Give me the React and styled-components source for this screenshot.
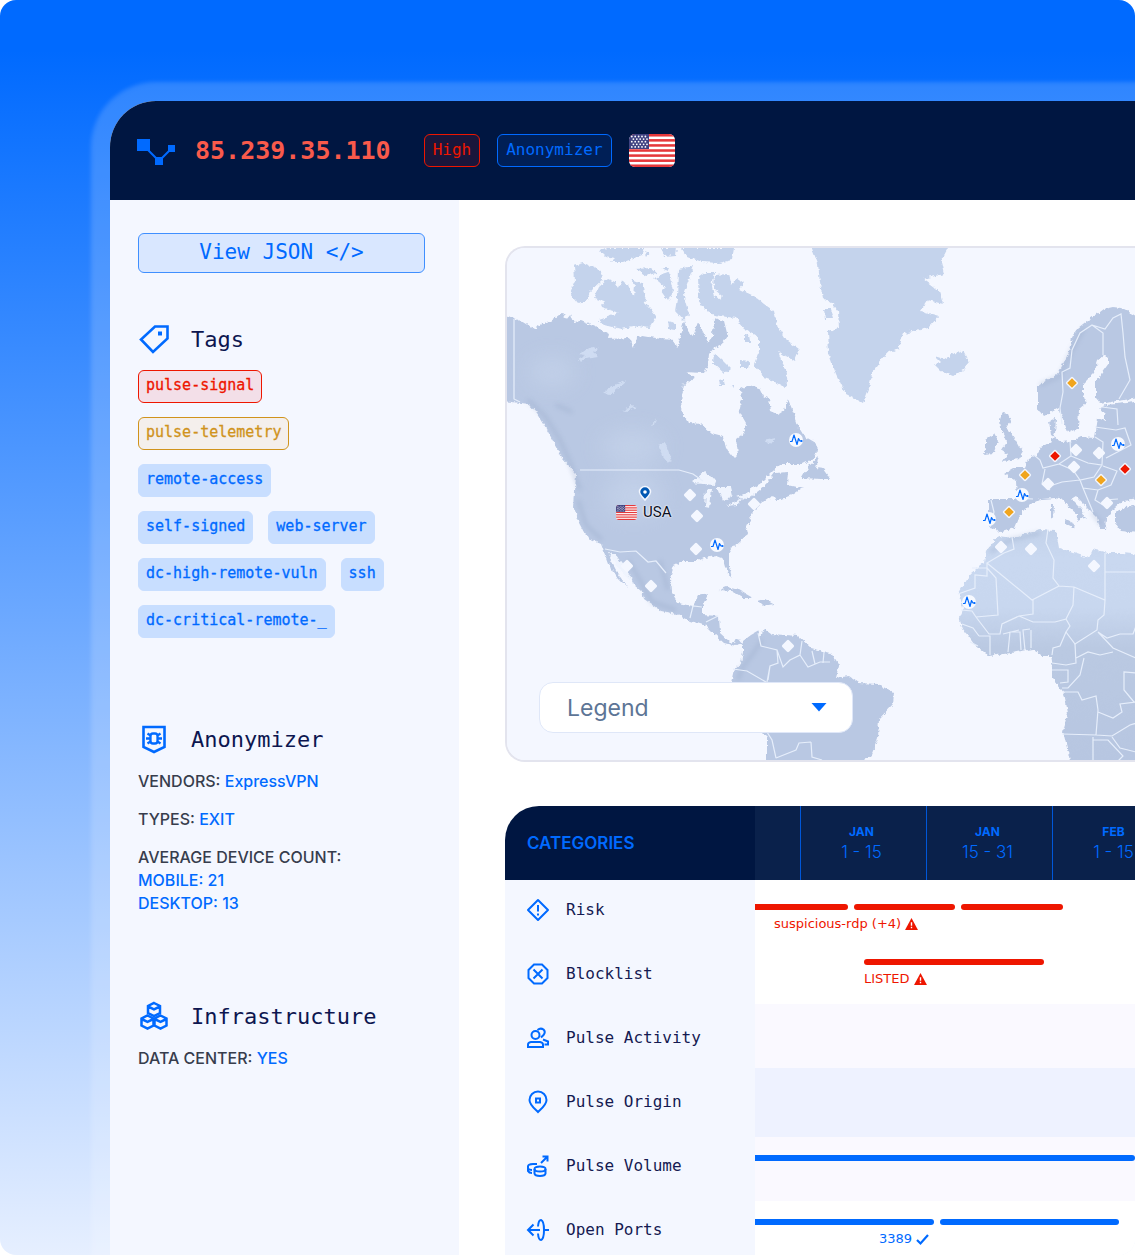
import React from "react";
import styled, { createGlobalStyle, css } from "styled-components";

const mono = `"DejaVu Sans Mono", "Liberation Mono", monospace`;
const sans = `Inter, "Liberation Sans", sans-serif`;

const tagRows = [
  [{ label: "pulse-signal", tone: "red" }],
  [{ label: "pulse-telemetry", tone: "amber" }],
  [{ label: "remote-access" }],
  [{ label: "self-signed" }, { label: "web-server" }],
  [{ label: "dc-high-remote-vuln" }, { label: "ssh" }],
  [{ label: "dc-critical-remote-_" }],
];

const periods = [
  { month: "JAN", days: "1 - 15" },
  { month: "JAN", days: "15 - 31" },
  { month: "FEB", days: "1 - 15" },
];

const land = [
  // mainland north america
  "M500 312L507 315 520 320 533 328 543 322 550 320 562 311 565 319 570 313 573 321 580 320 597 327 608 333 607 338 628 337 633 347 636 336 642 335 660 338 673 339 676 347 680 333 684 320 689 334 693 333 697 322 701 330 707 341 712 335 713 317 723 320 727 336 722 343 713 347 708 353 707 364 703 372 683 371 695 376 683 384 680 400 682 413 688 422 700 423 710 432 722 435 725 447 733 457 737 453 735 438 743 432 745 422 738 410 741 398 740 388 748 384 758 387 762 395 768 398 770 410 777 413 783 409 787 398 793 413 797 425 803 435 815 442 818 450 812 458 802 463 780 463 772 470 760 482 748 490 742 497 751 495 765 484 774 472 787 471 786 484 800 487 803 486 793 493 783 497 775 499 770 496 760 503 748 515 750 522 745 524 747 533 733 545 728 553 728 565 731 577 727 572 723 558 715 555 703 557 697 560 683 560 673 565 669 577 670 590 677 602 692 605 697 595 707 593 702 605 702 614 718 615 719 632 730 642 738 638 742 643 735 645 723 642 713 633 705 625 690 620 675 613 660 610 643 598 641 590 633 583 623 572 610 552 608 557 615 570 627 587 617 577 607 562 600 543 587 537 578 520 573 507 575 473 562 458 552 440 545 427 536 412 528 403 520 402 500 400Z",
  // south america
  "M742 640L750 634 757 630 760 636 763 628 770 633 797 635 810 647 830 652 838 665 835 677 848 675 858 682 877 683 893 692 892 703 878 718 877 737 870 755 857 764 766 764 766 737 760 731 745 705 730 682 733 668 740 662 742 650Z",
  // great britain, ireland
  "M1002 412L1007 413 1010 420 1005 427 1009 431 1013 437 1018 446 1023 450 1018 458 1002 460 1007 453 1001 449 1006 441 1003 434 999 427 998 418Z",
  "M985 438L993 433 997 440 993 452 982 453 985 446Z",
  // scandinavia and finland
  "M1037 385L1046 379 1057 373 1067 353 1072 333 1077 327 1087 319 1095 314 1103 308 1112 306 1120 307 1128 311 1140 318 1140 397 1115 400 1100 403 1095 397 1095 380 1108 362 1108 356 1103 355 1097 360 1093 372 1082 383 1082 393 1085 402 1078 408 1077 427 1067 432 1058 407 1043 415 1037 407Z",
  // continental europe
  "M1140 400L1125 402 1105 404 1098 408 1104 413 1104 420 1097 417 1094 437 1080 436 1072 440 1060 441 1050 434 1048 420 1055 417 1054 432 1050 441 1040 447 1036 454 1027 458 1023 467 1013 467 1003 473 1015 480 1016 498 987 498 987 527 995 528 998 532 1013 527 1018 515 1030 503 1040 498 1054 497 1062 499 1070 508 1077 514 1076 521 1083 516 1086 518 1080 508 1070 498 1075 495 1088 508 1096 516 1099 528 1104 528 1105 518 1113 508 1122 500 1140 498 1140 487 1128 483 1121 486 1120 494 1140 494Z",
  "M1114 511L1125 506 1140 502 1140 532 1120 530 1114 522Z",
  "M1064 518L1074 523 1073 527 1064 523ZM1050 503L1053 503 1052 518 1050 517Z",
  // cuba, hispaniola
  "M718 589L726 586 738 589 752 597 742 597 730 590ZM757 600L764 598 773 603 762 605Z",
  // newfoundland
  "M818 456L815 467 822 468 829 478 820 478 801 477 808 465Z",
];

const arcticLand = [
  "M573 265L583 262 600 270 601 280 590 290 587 298 578 303 569 292 574 280Z",
  "M593 297L598 286 607 278 614 281 618 288 620 280 627 284 633 297 634 284 631 278 641 282 645 302 655 315 648 327 638 325 620 328 600 323 598 319 618 312 600 306 604 301Z",
  "M653 277L668 272 672 290 667 300 660 290 664 286ZM666 320L674 322 674 329 667 328Z",
  "M677 268L693 265 688 278 682 293 688 313 683 320 674 310 676 298Z",
  "M598 249L606 247 643 247 640 254 622 261 610 261 614 257 604 255ZM644 250L648 252 646 255ZM660 247L676 247 675 254 663 255ZM680 247L733 247 731 259 718 262 700 261 687 256Z",
  "M635 268L650 267 656 272 645 275ZM660 266L668 266 666 270Z",
  "M697 277L705 271 714 271 711 285 713 296 717 298 722 296 713 288 714 274 728 273 731 284 736 277 743 282 738 288 753 295 763 303 773 310 777 327 783 337 798 348 793 360 777 350 781 361 787 372 785 387 772 380 763 377 753 363 758 350 758 336 743 327 735 317 718 315 707 312 698 300Z",
  "M713 352L722 360 730 368 724 373 712 362ZM743 334L749 335 750 341 743 341ZM740 360L749 361 747 367 740 367ZM718 380L722 379 723 384 719 384ZM730 384L733 384 733 388Z",
  // greenland
  "M810 245L817 263 819 282 822 297 831 302 837 310 838 327 827 330 828 353 835 373 845 393 853 397 862 402 868 386 872 370 883 355 897 348 903 333 927 327 938 315 920 310 927 299 942 303 938 290 922 278 943 273 940 260 948 245Z",
  "M823 308L830 308 833 318 824 318Z",
  // iceland
  "M933 355L943 358 953 353 962 350 968 362 962 369 952 375 940 370 933 363 940 362Z",
];

const africa =
  "M998 535L985 550 983 562 970 572 958 592 962 607 958 617 962 628 973 643 988 655 1010 652 1032 648 1040 655 1050 655 1052 667 1052 677 1063 692 1067 712 1062 730 1070 764 1140 764 1140 554 1122 552 1107 552 1092 548 1088 557 1073 552 1058 547 1055 530 1040 529 1027 532 1013 537Z";

const borders = [
  "M514 319V399L520 402",
  "M580 470H679L693 474 703 481",
  "M605 549L620 552 636 551 648 562 656 561 666 573",
  // central and south america
  "M690 618L693 606 702 607M706 622L718 616",
  "M758 633L761 646 777 650 778 663 770 666 767 682M733 669L747 671 766 682M777 650L783 667 790 660 800 655 802 641M800 655L808 667 820 662 830 662M812 651L815 664M824 652L823 663M770 666L768 680",
  "M767 732L772 740 776 758M776 758L796 750 799 743 811 742M811 742L812 757 822 760",
  // scandinavia
  "M1062 424L1060 408 1063 392 1062 372 1070 368 1072 350 1080 333 1092 325 1103 333 1103 355M1092 325L1105 329 1113 318 1121 314 1123 333 1125 357 1130 380 1119 399",
  // central europe
  "M1070 441L1071 456 1059 464 1043 468 1040 460 1034 455M1071 456L1088 463 1102 465 1103 442 1095 437M1095 427L1116 430 1125 428 1131 445 1106 458M1102 407L1117 409 1118 425M1102 465L1094 477 1080 480 1073 470 1059 464M1045 469L1042 484 1050 490M1050 486L1062 482 1080 480M1080 480L1083 488 1098 490 1111 485 1117 471 1103 466M1083 488L1088 500 1093 512M1098 490L1095 500 1103 505M1104 500L1118 499M1015 498L1033 499",
  "M991 500L994 512 990 527",
  // north and west africa
  "M1004 553L1014 549 1012 537M1004 553L987 563 1032 600 1059 586 1053 578 1054 560 1046 543 1048 529M987 563V576L975 575 975 588 958 594M972 568H987M987 568L996 578 998 615 976 617M961 610L972 611 976 617 989 634 1000 634 1002 624 1019 616 1033 614 1033 600M1059 586L1074 587 1105 600V553M1105 572H1140M1074 587L1073 605 1066 619 1055 622 1033 622 1019 616M1105 600L1104 615 1098 620 1097 630 1075 644 1066 632 1070 626 1066 619M1098 632L1107 638 1120 634 1133 634 1136 626M1098 632L1113 648 1136 658",
  "M962 624L973 628 979 636M979 636L990 636 990 655M970 642L978 646M1008 652L1010 632 1020 632 1021 650M1025 650L1023 630 1030 629M1031 648V630M1019 630L1003 634",
  "M1066 632L1060 646 1053 648 1052 655M1075 644L1076 663 1066 665 1052 663M1076 658L1088 652 1100 655 1113 652M1084 658L1080 675 1068 688 1062 688M1052 670H1068V682L1060 683M1063 692H1078L1082 700 1096 696 1098 710 1096 735 1062 734M1096 735L1112 736 1130 725 1140 722M1093 737V764M1093 740H1108L1123 756 1115 764M1098 712L1113 718 1122 712 1120 704 1136 702M1136 673L1124 672 1124 690 1134 702M1112 737L1120 748 1140 753",
];

const lakes = [
  "M690 482L703 471 716 479 714 484ZM705 488L711 487 709 507 704 506ZM716 486L730 486 732 494 722 500Z",
  "M724 505L742 497 736 504ZM735 496L748 491 745 498Z",
  "M608 553L614 553 626 569 633 583 622 573Z",
];

const highlands = [
  "M577 353L590 345 597 348 592 352 597 356 585 358 580 362 577 358 584 354ZM602 392L614 384 626 379 616 388 609 394ZM621 410L630 405 636 406 625 411ZM650 425L655 417 653 424ZM657 444L664 441 671 460 667 462 662 456ZM764 440L774 438 770 443Z",
];

// mountain ridges, drawn blurred over the land
const ridges = [
  "M528 400L545 416 560 440 570 462 580 490M556 405L572 412M578 500L586 525 602 540M628 560L640 580 652 602 676 610M660 560L668 590",
  "M762 640L752 655 742 668 738 680M1040 385L1060 376 1072 350 1084 328M990 552L1010 540 1040 533M1092 512L1102 525",
];

const diamonds = [
  { x: 690, y: 495 },
  { x: 697, y: 516 },
  { x: 696, y: 549 },
  { x: 651, y: 586 },
  { x: 627, y: 566 },
  { x: 754, y: 504 },
  { x: 788, y: 646 },
  { x: 1001, y: 547 },
  { x: 1031, y: 549 },
  { x: 1094, y: 566 },
  { x: 1076, y: 450 },
  { x: 1099, y: 453 },
  { x: 1074, y: 467 },
  { x: 1048, y: 484 },
  { x: 1107, y: 503 },
  { x: 1072, y: 383, color: "#f0a51e" },
  { x: 1025, y: 475, color: "#f0a51e" },
  { x: 1101, y: 480, color: "#f0a51e" },
  { x: 1009, y: 512, color: "#f0a51e" },
  { x: 1055, y: 456, color: "#ee1600" },
  { x: 1125, y: 469, color: "#ee1600" },
];

const pulses = [
  { x: 796, y: 440 },
  { x: 717, y: 545 },
  { x: 1118, y: 444 },
  { x: 1022, y: 495 },
  { x: 989, y: 519 },
  { x: 969, y: 602 },
];

const Flag = ({ width, height }) => (
  <svg width={width} height={height} viewBox="0 0 46 33" aria-label="US flag">
    <clipPath id={`flag${width}`}>
      <rect width="46" height="33" rx="6" />
    </clipPath>
    <g clipPath={`url(#flag${width})`}>
      <rect width="46" height="33" fill="#fff" />
      {[0, 1, 2, 3, 4, 5, 6].map((n) => (
        <rect key={n} y={n * 5.08} width="46" height="2.54" fill="#e5383b" />
      ))}
      <rect width="20" height="15" fill="#3f4281" />
      {[0, 1, 2, 3, 4].map((r) =>
        [0, 1, 2, 3, 4].map((c) => (
          <circle
            key={`${r}${c}`}
            cx={(r % 2 ? 4.4 : 2.8) + c * 3.4}
            cy={2.5 + r * 2.6}
            r="0.9"
            fill="#fff"
          />
        ))
      )}
    </g>
  </svg>
);

const WorldMap = () => (
  <MapSvg viewBox="507 248 628 512" preserveAspectRatio="xMinYMin slice">
    <defs>
      <linearGradient id="sahara" x1="0" y1="0" x2="0" y2="1">
        <stop offset="0" stopColor="#c3d2ea" />
        <stop offset="0.12" stopColor="#c9d8f0" />
        <stop offset="0.33" stopColor="#c8d7ef" />
        <stop offset="0.5" stopColor="#bac9e2" />
        <stop offset="1" stopColor="#b7c6e1" />
      </linearGradient>
      <filter id="coast" x="0" y="0" width="1" height="1">
        <feTurbulence baseFrequency="0.14" numOctaves="2" seed="4" />
        <feDisplacementMap
          in="SourceGraphic"
          scale="4"
          xChannelSelector="R"
          yChannelSelector="G"
        />
      </filter>
      <filter id="soft" x="-50%" y="-50%" width="200%" height="200%">
        <feGaussianBlur stdDeviation="12" />
      </filter>
      <filter id="ridge" x="-10%" y="-10%" width="120%" height="120%">
        <feGaussianBlur stdDeviation="2" />
      </filter>
    </defs>
    <g filter="url(#coast)">
      <rect x="490" y="240" width="660" height="540" fill="#f4f7ff" />
      <g fill="#b9c8e3">
        {land.map((d) => (
          <path key={d} d={d} />
        ))}
      </g>
      <g fill="#c4d3ec">
        {arcticLand.map((d) => (
          <path key={d} d={d} />
        ))}
      </g>
      <path d={africa} fill="url(#sahara)" />
      <g fill="#cfdcf2">
        {highlands.map((d) => (
          <path key={d} d={d} />
        ))}
      </g>
      <g fill="#eff4fe">
        {lakes.map((d) => (
          <path key={d} d={d} />
        ))}
      </g>
    </g>
    <g filter="url(#soft)" fill="#d3e0f4" opacity="0.4">
      <ellipse cx="552" cy="372" rx="24" ry="14" />
      <ellipse cx="632" cy="447" rx="32" ry="16" />
      <ellipse cx="634" cy="496" rx="30" ry="20" />
    </g>
    <g
      filter="url(#ridge)"
      fill="none"
      stroke="#93a5c4"
      strokeWidth="4"
      opacity="0.3"
    >
      {ridges.map((d) => (
        <path key={d} d={d} />
      ))}
    </g>
    <g fill="none" stroke="#e6eefb" strokeWidth="1.2">
      {borders.map((d) => (
        <path key={d} d={d} />
      ))}
    </g>
    {diamonds.map(({ x, y, color }) => (
      <g key={`${x}-${y}`} transform={`translate(${x} ${y}) rotate(45)`}>
        <rect x="-4.7" y="-4.7" width="9.4" height="9.4" rx="1.4" fill="#f4f7ff" />
        {color && <rect x="-3.4" y="-3.4" width="6.8" height="6.8" fill={color} />}
      </g>
    ))}
    {pulses.map(({ x, y }) => (
      <g key={x} transform={`translate(${x} ${y})`}>
        <circle r="7" fill="#f6f9ff" />
        <path
          d="M-6 1.5H-4L-2-5 1 4.500 2.500-1.500 4 1H6"
          fill="none"
          stroke="#006aff"
          strokeWidth="1.2"
          strokeLinejoin="round"
        />
        <circle cx="5.500" cy="1" r="1.100" fill="#006aff" />
      </g>
    ))}
    <path
      d="M645 500C642 496 639.500 495 639.500 492a5.500 5.500 0 0 1 11 0C650.500 495 648 496 645 500Z"
      fill="#0057b3"
      stroke="#f4f7ff"
      strokeWidth="1.500"
    />
    <circle cx="645" cy="492" r="1.800" fill="#fff" />
  </MapSvg>
);

const Icon = ({ children, size = 30 }) => (
  <svg
    width={size}
    height={size}
    viewBox={`0 0 ${size} ${size}`}
    fill="none"
    stroke="#006aff"
    strokeWidth={size > 24 ? 2.6 : 2}
  >
    {children}
  </svg>
);

const Logo = () => (
  <svg width="39" height="28" viewBox="0 0 39 28" fill="#006aff">
    <path d="M11 13L22 24 34 12" fill="none" stroke="#006aff" strokeWidth="2" />
    <path d="M0 2h13v12H0zM18 20h8v8h-8zM31 8h7v7h-7z" />
  </svg>
);

const TagIcon = () => (
  <Icon>
    <path d="M16 2.500H28.500V14.500L14 28 2 15.500Z" />
    <path d="M19 7.500h4v4h-4z" fill="#006aff" stroke="none" />
  </Icon>
);

const ShieldBugIcon = () => (
  <Icon>
    <path d="M4.500 3H25.500V23L15 28 4.500 23Z" />
    <rect x="11.500" y="9.500" width="7" height="10" rx="2.500" strokeWidth="2.300" />
    <path
      d="M11.500 11.500L8.500 9.500M11 14.500H7M11.500 17.500L8.500 19.500M18.500 11.500L21.500 9.500M19 14.500H23M18.500 17.500L21.500 19.500"
      strokeWidth="2.300"
    />
  </Icon>
);

const CubesIcon = () => (
  <Icon>
    {["translate(15 8.500)", "translate(8.500 21)", "translate(21.500 21)"].map((place) => (
      <path
        key={place}
        transform={place}
        d="M0-6.500L6-3.500V3.500L0 6.500-6 3.500V-3.500ZM-6-3L0-.2 6-3"
        strokeWidth="2.500"
      />
    ))}
  </Icon>
);

const categories = [
  {
    name: "Risk",
    icon: (
      <>
        <path d="M12 2L22 12 12 22 2 12Z" strokeLinejoin="round" />
        <path d="M12 7V13.500M12 15.500V17.500" />
      </>
    ),
  },
  {
    name: "Blocklist",
    icon: (
      <>
        <path d="M8 2.500H16L21.500 8V16L16 21.500H8L2.500 16V8Z" />
        <path d="M7.500 7.500L16.500 16.500M16.500 7.500L7.500 16.500" />
      </>
    ),
  },
  {
    name: "Pulse Activity",
    icon: (
      <>
        <circle cx="9.500" cy="9" r="4" />
        <path d="M2 21V18.500Q2 16.500 5 16H14Q17 16.500 17 18.500V21ZM11.500 4Q14.500 1.500 17.500 3.500 20 6 17.500 9L15 11.500M17 13.500L22 15.500V18.500H18.500" />
      </>
    ),
  },
  {
    name: "Pulse Origin",
    icon: (
      <>
        <path d="M12 22C9 19 3.500 15 3.500 10a8.500 8.500 0 0 1 17 0C20.500 15 15 19 12 22Z" />
        <path d="M10 8.500h4v4h-4z" />
      </>
    ),
  },
  {
    name: "Pulse Volume",
    icon: (
      <>
        <ellipse cx="14" cy="15" rx="5.500" ry="2.500" />
        <path d="M8.500 15V19.500Q9 22 14 22 19 22 19.500 19.500V15M2 12.500Q2 10 7 10H11M2 12V17Q3 19 6 19M2 14.500Q3 16 6 16M15 9L21 3M16.500 2.500H21.500V7.500" />
      </>
    ),
  },
  {
    name: "Open Ports",
    icon: (
      <>
        <path d="M2 12H14M17 12H23M7.500 6.500L2 12 7.500 17.500" />
        <path d="M12 8.500Q12.500 2 15 2 18 3 18 12T15 22Q12.500 22 12 15.500" />
      </>
    ),
  },
];

// each track is 380 units wide; a plain number is free space
const timeline = [
  {
    height: 55,
    segments: [{ span: 93, open: true }, { span: 102 }, { span: 102 }, 66],
    note: { text: "suspicious-rdp (+4)", inset: 19, icon: "alert" },
    color: "#ee1600",
  },
  {
    height: 63,
    segments: [103, { span: 180 }, 85],
    note: { text: "LISTED", inset: 109, icon: "alert" },
    color: "#ee1600",
  },
  { height: 64, segments: [], background: "#faf9ff" },
  { height: 69, segments: [], background: "#eef2ff" },
  {
    height: 64,
    segments: [{ span: 380, open: true }],
    color: "#006aff",
    background: "#faf9ff",
  },
  {
    height: 64,
    segments: [{ span: 179, open: true }, { span: 179 }, 10],
    note: { text: "3389", inset: 124, icon: "check" },
    color: "#006aff",
  },
];

const NoteIcon = ({ type }) =>
  type === "alert" ? (
    <svg width="13" height="12" viewBox="0 0 14 13">
      <path d="M7 0L14 13H0Z" fill="#ee1600" />
      <path d="M7 4.500V8.500M7 9.500V11.200" stroke="#fff" strokeWidth="1.500" />
    </svg>
  ) : (
    <svg width="13" height="13" viewBox="0 0 13 13">
      <path d="M1 7L4.500 10.500 12 2" fill="none" stroke="#006aff" strokeWidth="2.200" />
    </svg>
  );

const App = () => {
  return (
    <>
      <GlobalStyle />
      <Page>
        <Device>
          <TopBar>
            <Logo />
            <Address>85.239.35.110</Address>
            <Badges>
              <Badge $danger>High</Badge>
              <Badge>Anonymizer</Badge>
              <Flag width={46} height={33} />
            </Badges>
          </TopBar>
          <Body>
            <SideBar>
              <JsonButton type="button">View JSON &lt;/&gt;</JsonButton>
              <Section>
                <SectionTitle>
                  <TagIcon />
                  Tags
                </SectionTitle>
                <TagList>
                  {tagRows.map((row) => (
                    <TagRow key={row[0].label}>
                      {row.map(({ label, tone }) => (
                        <Tag key={label} $tone={tone}>
                          {label}
                        </Tag>
                      ))}
                    </TagRow>
                  ))}
                </TagList>
              </Section>
              <Section>
                <SectionTitle>
                  <ShieldBugIcon />
                  Anonymizer
                </SectionTitle>
                <Facts>
                  <p>
                    VENDORS: <b>ExpressVPN</b>
                  </p>
                  <p>
                    TYPES: <b>EXIT</b>
                  </p>
                  <p>
                    AVERAGE DEVICE COUNT:
                    <br />
                    <b>MOBILE: 21</b>
                    <br />
                    <b>DESKTOP: 13</b>
                  </p>
                </Facts>
              </Section>
              <Section>
                <SectionTitle>
                  <CubesIcon />
                  Infrastructure
                </SectionTitle>
                <Facts>
                  <p>
                    DATA CENTER: <b>YES</b>
                  </p>
                </Facts>
              </Section>
            </SideBar>
            <Main>
              <MapCard>
                <WorldMap />
                <Country>
                  <Flag width={21} height={15} />
                  USA
                </Country>
                <Legend>
                  <select aria-label="Legend" defaultValue="legend">
                    <option value="legend">Legend</option>
                  </select>
                  <svg width="16" height="10" viewBox="0 0 16 10">
                    <path d="M0.500 1H15.500L8 9.500Z" fill="#006aff" />
                  </svg>
                </Legend>
              </MapCard>
              <Activity>
                <CategoryHead>CATEGORIES</CategoryHead>
                <PeriodHead>
                  {periods.map(({ month, days }) => (
                    <Period key={month + days}>
                      <b>{month}</b>
                      {days}
                    </Period>
                  ))}
                </PeriodHead>
                <CategoryList>
                  {categories.map(({ name, icon }) => (
                    <Category key={name}>
                      <Icon size={24}>{icon}</Icon>
                      {name}
                    </Category>
                  ))}
                </CategoryList>
                <Timeline>
                  {timeline.map(({ height, segments, note, color, background }, index) => (
                    <Track key={index} $height={height} $background={background}>
                      <Segments>
                        {segments.map((segment, i) =>
                          segment.span ? (
                            <Bar
                              key={i}
                              $span={segment.span}
                              $open={segment.open}
                              $color={color}
                            />
                          ) : (
                            <Space key={i} $span={segment} />
                          )
                        )}
                      </Segments>
                      {note && (
                        <Note $inset={note.inset} $color={color}>
                          {note.text}
                          <NoteIcon type={note.icon} />
                        </Note>
                      )}
                    </Track>
                  ))}
                </Timeline>
              </Activity>
            </Main>
          </Body>
        </Device>
      </Page>
    </>
  );
};

const GlobalStyle = createGlobalStyle`
  * {
    box-sizing: border-box;
    margin: 0;
    padding: 0;
  }
  body {
    background: #fff;
    padding: 0 1px 1px 0;
    overflow: hidden;
  }
  svg {
    display: block;
    flex: none;
  }
`;

const Page = styled.div`
  height: calc(100vh - 1px);
  padding: 101px 0 0 110px;
  overflow: hidden;
  border-radius: 16px;
  background: linear-gradient(180deg, #006aff 0%, #006aff 4%, #e6efff 100%);
`;

const Device = styled.div`
  min-height: 100%;
  border-radius: 46px 0 0 0;
  background: #fff;
  box-shadow: 0 0 4px 19px rgba(255, 255, 255, 0.17);
`;

const TopBar = styled.header`
  display: flex;
  align-items: center;
  height: 99px;
  padding-left: 27px;
  border-radius: 46px 0 0 0;
  background: #001641;
`;

const Address = styled.h1`
  margin: 0 33px 0 19px;
  font-family: ${mono};
  font-size: 25px;
  font-weight: 700;
  color: #f95a4b;
`;

const Badges = styled.div`
  display: flex;
  align-items: center;
  gap: 17px;
`;

const Badge = styled.span`
  height: 33px;
  padding: 0 8px;
  border: 1px solid;
  border-radius: 6px;
  font-family: ${mono};
  font-size: 16px;
  line-height: 30px;
  color: ${({ $danger }) => ($danger ? "#ee1600" : "#006aff")};
  background: ${({ $danger }) => ($danger ? "#1a163b" : "#001f56")};
`;

const Body = styled.div`
  display: flex;
`;

const SideBar = styled.aside`
  flex: none;
  width: 349px;
  padding: 33px 34px 0 28px;
  background: #f4f7ff;
`;

const JsonButton = styled.button`
  width: 100%;
  height: 40px;
  padding-bottom: 2px;
  border: 1px solid #3f8fff;
  border-radius: 6px;
  background: #d9e7ff;
  font-family: ${mono};
  font-size: 21px;
  color: #006aff;
  cursor: pointer;
`;

const Section = styled.section`
  margin-top: 50px;
  & + & {
    margin-top: 85px;
  }
`;

const SectionTitle = styled.h2`
  display: flex;
  align-items: center;
  gap: 22px;
  height: 32px;
  padding-left: 1px;
  font-family: ${mono};
  font-size: 22px;
  font-weight: 400;
  color: #0d1650;
`;

const TagList = styled.div`
  display: flex;
  flex-direction: column;
  gap: 14px;
  margin-top: 15px;
`;

const TagRow = styled.div`
  display: flex;
  gap: 15px;
`;

const Tag = styled.span`
  height: 33px;
  padding: 0 7px;
  border: 1px solid #c8deff;
  border-radius: 6px;
  font-family: ${mono};
  font-size: 15px;
  line-height: 29px;
  color: #006aff;
  background: #c8deff;
  -webkit-text-stroke: 0.3px;
  ${({ $tone }) =>
    $tone === "red" &&
    css`
      color: #ee1600;
      border-color: #ee1600;
      background: #f3dfe8;
    `}
  ${({ $tone }) =>
    $tone === "amber" &&
    css`
      color: #d0931c;
      border-color: #d0931c;
      background: #f4efec;
    `}
`;

const Facts = styled.div`
  display: flex;
  flex-direction: column;
  gap: 15px;
  margin-top: 15px;
  font-family: ${sans};
  font-size: 16px;
  font-weight: 500;
  line-height: 23px;
  color: #373d4d;
  b {
    font-weight: 500;
    color: #006aff;
  }
`;

const Main = styled.main`
  flex: 1;
  min-width: 0;
  padding: 46px 0 0 46px;
`;

const MapCard = styled.div`
  position: relative;
  height: 516px;
  border: 2px solid #e3e4ee;
  border-right: none;
  border-radius: 20px 0 0 20px;
  overflow: hidden;
  background: #f4f7ff;
`;

const MapSvg = styled.svg`
  width: 100%;
  height: 100%;
`;

const Country = styled.div`
  position: absolute;
  left: 109px;
  top: 254px;
  display: flex;
  align-items: center;
  gap: 6px;
  font-family: Roboto, sans-serif;
  font-size: 15px;
  line-height: 20px;
  color: #0a0f1f;
  text-shadow: 0 0 2px #fff, 0 0 2px #fff;
`;

const Legend = styled.div`
  position: absolute;
  left: 32px;
  bottom: 27px;
  width: 314px;
  select {
    width: 100%;
    height: 51px;
    padding: 0 27px;
    appearance: none;
    border: 1px solid #dfe7f8;
    border-radius: 14px;
    background: #fff;
    font-family: ${sans};
    font-size: 23px;
    color: #5d7596;
  }
  svg {
    position: absolute;
    right: 26px;
    top: 20px;
    pointer-events: none;
  }
`;

const Activity = styled.section`
  display: grid;
  grid-template-columns: 250px 1fr;
  margin-top: 44px;
  border-radius: 34px 0 0 0;
  overflow: hidden;
`;

const CategoryHead = styled.h3`
  height: 74px;
  padding-left: 22px;
  font-family: ${sans};
  font-size: 17px;
  font-weight: 600;
  line-height: 74px;
  color: #006aff;
  background: #001641;
`;

const PeriodHead = styled.div`
  display: flex;
  min-width: 0;
  padding-left: 45px;
  overflow: hidden;
  background: #0a214b;
`;

const Period = styled.div`
  flex: none;
  display: flex;
  flex-direction: column;
  align-items: center;
  justify-content: center;
  width: 126px;
  padding: 0 4px 2px 0;
  border-left: 1px solid #0057d9;
  font-family: ${sans};
  font-size: 17px;
  font-weight: 300;
  line-height: 20px;
  color: #006aff;
  b {
    font-size: 12px;
    font-weight: 700;
  }
`;

const CategoryList = styled.div`
  background: #f4f7ff;
`;

const Category = styled.div`
  display: flex;
  align-items: center;
  gap: 16px;
  height: 64px;
  padding: 0 0 5px 21px;
  font-family: ${mono};
  font-size: 16px;
  color: #151a52;
`;

const Timeline = styled.div`
  min-width: 0;
  padding-top: 6px;
`;

const Track = styled.div`
  height: ${({ $height }) => $height}px;
  padding-top: 18px;
  background: ${({ $background }) => $background || "#fff"};
`;

const Segments = styled.div`
  display: flex;
  gap: 6px;
`;

const Bar = styled.div`
  flex: ${({ $span }) => $span} 1 0;
  height: 6px;
  border-radius: ${({ $open }) => ($open ? "0 3px 3px 0" : "3px")};
  background: ${({ $color }) => $color};
`;

const Space = styled.div`
  flex: ${({ $span }) => $span} 1 0;
`;

const Note = styled.p`
  display: flex;
  align-items: center;
  gap: 4px;
  margin-top: 4px;
  padding-left: ${({ $inset }) => $inset}px;
  font-family: "DejaVu Sans", sans-serif;
  font-size: 13px;
  line-height: 20px;
  color: ${({ $color }) => $color};
`;

export default App;
